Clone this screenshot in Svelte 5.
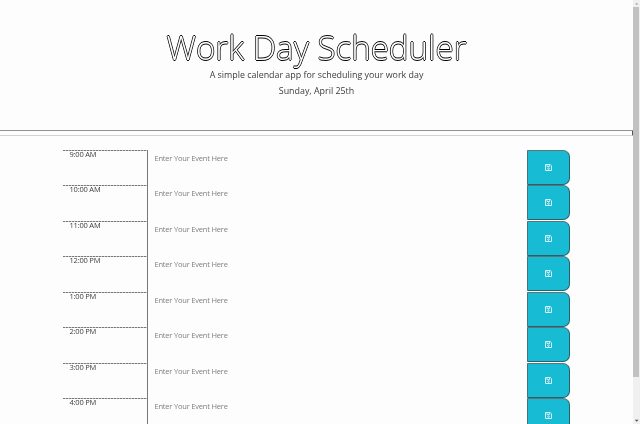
<script>
  const hours = ['9:00 AM', '10:00 AM', '11:00 AM', '12:00 PM', '1:00 PM', '2:00 PM', '3:00 PM', '4:00 PM'];
</script>

<div class="window">
  <main class="page">
    <header>
      <h1>Work Day Scheduler</h1>
      <p class="lead">A simple calendar app for scheduling your work day</p>
      <p class="date">Sunday, April 25th</p>
    </header>
    <div class="rule"></div>
    <section class="planner">
      {#each hours as hour}
        <div class="row">
          <div class="hour">{hour}</div>
          <div class="event">Enter Your Event Here</div>
          <button aria-label="Save">
            <svg viewBox="0 0 7 7" width="7" height="7" fill="none" stroke="#d4f4f8">
              <path d="M.5 .5H5.3L6.5 1.7V6.5H.5Z" stroke-width="1" />
              <path d="M2 .7V2.6H4.6V.7" stroke-width=".9" />
              <circle cx="3.5" cy="4.6" r=".8" stroke-width=".9" />
            </svg>
          </button>
        </div>
      {/each}
    </section>
  </main>
  <aside class="scrollbar">
    <svg width="7" height="7" viewBox="0 0 7 7"><path d="M2 4.5L3.7 2.8L5.4 4.5Z" fill="#a0a0a0" /></svg>
    <div class="thumb"></div>
    <svg width="7" height="7" viewBox="0 0 7 7"><path d="M1.8 2.7H5.6L3.7 4.7Z" fill="#505050" /></svg>
  </aside>
</div>

<style>
  :global(body) {
    background: #fdfdfd;
  }
  .window {
    display: flex;
    width: 640px;
    height: 424px;
    overflow: hidden;
    font-family: "Open Sans", sans-serif;
    color: #3c3c3c;
    will-change: transform;
  }
  .page {
    width: 633px;
    height: 424px;
    overflow: hidden;
  }
  header {
    box-sizing: border-box;
    height: 130px;
    padding-top: 28px;
    text-align: center;
  }
  h1 {
    margin: 0 0 1px;
    font-size: 33.1px;
    line-height: 39px;
    font-weight: 300;
    color: #fff;
    text-shadow: -.75px 0 #000, .75px 0 #000, 0 -.75px #000, 0 .75px #000;
    white-space: nowrap;
  }
  p {
    margin: 0;
    font-size: 8.9px;
    line-height: 13px;
  }
  .date {
    margin-top: 3px;
  }
  .rule {
    box-sizing: border-box;
    height: 6px;
    border-top: 1px solid #929292;
    border-right: 1px solid #555;
    border-bottom: 1px solid #d2d2d2;
    border-radius: 0 1px 1px 0;
  }
  .planner {
    width: 507px;
    margin: 13.6px 0 0 63px;
  }
  .row {
    display: grid;
    grid-template-columns: 85px 1fr 43px;
    height: 35.55px;
  }
  .hour {
    box-sizing: border-box;
    padding-left: 6.5px;
    border-right: 1px solid #777;
    background: repeating-linear-gradient(90deg, #777 0 2px, #c8c8c8 2px 3px) 0 0 / 100% 1px no-repeat;
    font-size: 7.5px;
    letter-spacing: -.2px;
    line-height: 8px;
  }
  .event {
    padding: 3px 0 0 6.5px;
    font-size: 7.5px;
    letter-spacing: -.2px;
    line-height: 10px;
    color: #808080;
  }
  button {
    display: flex;
    align-items: center;
    justify-content: center;
    box-sizing: border-box;
    height: 35px;
    margin: 0;
    padding: 0;
    border: 1px solid #28616c;
    border-top-color: #5f7376;
    border-left-color: #4c7078;
    border-radius: 0 7px 7px 0;
    background: #17bbd4;
  }
  .scrollbar {
    display: flex;
    flex-direction: column;
    width: 7px;
    background: #f0f0f0;
  }
  .scrollbar svg {
    display: block;
  }
  .thumb {
    height: 370px;
    margin: 0 1px 40px 0;
    background: #c1c1c1;
  }
</style>
